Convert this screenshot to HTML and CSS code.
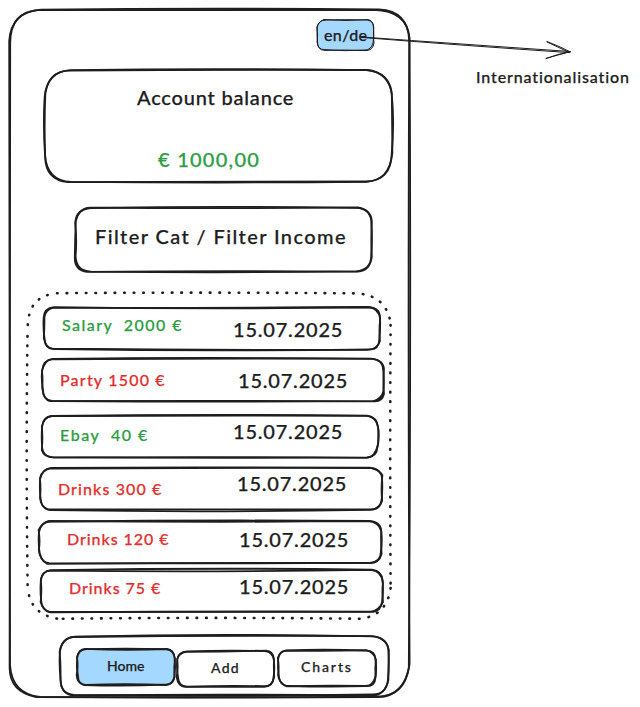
FILE: index.html
```html
<!DOCTYPE html>
<html lang="en">
<head>
<meta charset="utf-8">
<title>Account balance</title>
<link rel="stylesheet" href="styles.css">
</head>
<body>
<div class="board">
  <main class="phone">
    <svg class="sketch" viewBox="9 9 401 689" aria-hidden="true">
      <path d="M41 9.7 Q205 7.7 379 9.5 Q408.5 11 409.2 41 Q407.8 360 409.6 664 Q405 696 378 697.2 Q200 698 40 696.8 Q12 694 10 665 Q10.4 340 9.2 41 Q11 12 41 9.7Z"/>
      <path d="M38 10.2 Q220 9.6 374 9.9 Q407 11 409.6 38 Q411.2 340 408.8 668 Q404 697 376 696.6 Q220 697.6 36 697 Q10 692 9.6 668 Q9 380 10.2 44 Q10 12 38 10.2Z"/>
    </svg>

    <button class="lang">
      <svg class="sketch sketch-fine sketch-blue" viewBox="317 20 57 31" aria-hidden="true">
        <path class="fill" d="M325 20 Q345 19.3 367 20 Q374 21 373.8 28 Q373 36 374 43 Q373 50.4 366 50.6 Q345 49.6 325 50.4 Q317.5 50 317.6 43 Q316.6 35 317.2 28 Q318 20.5 325 20Z"/>
        <path d="M324 19.6 Q346 21.4 368 19.6 Q373 20 373.4 27 Q374.6 37 373 43 Q371 50 365 50 Q345 51.6 324 49.6 Q318 49.5 317 42 Q318.4 35 316.8 27 Q319 21 324 19.6Z"/>
      </svg>
      <span class="t-lang">en/de</span>
    </button>

    <section class="balance">
      <svg class="sketch" viewBox="45 70 348 113" aria-hidden="true">
        <path d="M71 70.1 Q220 68.2 366 70.2 Q391 72 392 97 Q394.5 125 391.6 155 Q391 180 366 181.8 Q220 183.2 71 181.8 Q47 181 45 155 Q43 125 44.6 97 Q47 71 71 70.1Z"/>
        <path d="M68 70.7 Q220 69.5 368 70 Q389 73 391.8 94 Q392 125 392.4 153 Q389 181 367 181.5 Q220 182 68 182.2 Q45.5 180 45.2 157 Q44 125 45.4 93 Q49 72 68 70.7Z"/>
      </svg>
      <h1 class="t-title">Account balance</h1>
      <p class="t-total income">€ 1000,00</p>
    </section>

    <section class="filter">
      <svg class="sketch" viewBox="75 208 297 64" aria-hidden="true">
        <path d="M91 208 Q220 205.8 356 207.8 Q371 208 371.4 223 Q372.6 240 371.2 256 Q371 270 356 271.4 Q222 273 91 271.6 Q76 271 75.6 256 Q77 240 75.2 223 Q76 209 91 208Z"/>
        <path d="M90 207.6 Q220 208.8 358 207.4 Q371 210 371.8 221 Q370.8 240 371.8 257 Q370 271 358 271.6 Q220 270.4 87 271.8 Q74.6 270 74.8 258 Q75 240 75.8 221 Q79 208 90 207.6Z"/>
      </svg>
      <span class="t-filter">Filter Cat / Filter Income</span>
    </section>

    <section class="list">
      <svg class="sketch sketch-dotted" viewBox="27 292 364 327" aria-hidden="true">
        <path d="M57 293.2 Q210 292 358 293.4 Q386 296 390.4 322"/>
        <path d="M390.6 325 Q389.8 450 390.6 585"/>
        <path d="M390.6 588 Q387 615 361 618.8 Q210 617 60 618.8"/>
        <path d="M57 618.6 Q30 614 27.8 588"/>
        <path d="M27.6 585 Q25.8 450 27.6 328"/>
        <path d="M27.8 325 Q29 297 54 293.6"/>
      </svg>

      <article class="row row-1">
        <svg class="sketch" viewBox="44 307 336 43" aria-hidden="true">
          <path d="M54 307.2 Q210 309.5 370 307.4 Q380 308 380 318 Q380.6 329 379.2 340 Q379 349.4 370 349.4 Q210 351.6 54 349 Q45 349 44.6 339 Q43 329 43.6 318 Q44 308 54 307.2Z"/>
          <path d="M53 307.8 Q200 308.2 368 307 Q379 308 380.2 319 Q378.8 330 380 341 Q377 350 367 349.8 Q210 350.2 52 348.6 Q45.8 348 43.8 338 Q44.6 328 44.4 317 Q46 309 53 307.8Z"/>
        </svg>
        <span class="amount income">Salary&nbsp; 2000 €</span>
        <time class="date">15.07.2025</time>
      </article>

      <article class="row row-2">
        <svg class="sketch" viewBox="42 358 342 43" aria-hidden="true">
          <path d="M53 358.8 Q210 357.2 373 358.8 Q383 360 383.2 370 Q384.4 380 383.4 391 Q382 400.6 373 401.2 Q210 402 52 401 Q43 400 43 390 Q41 379 42.2 370 Q43 360 53 358.8Z"/>
          <path d="M51 359.4 Q200 358.2 371 358.6 Q383.4 360 384 369 Q382.8 382 384 394 Q382 402 374 401.4 Q220 400.4 50 401.2 Q43.6 400 42.2 388 Q43 379 42 371 Q45 360 51 359.4Z"/>
          <path d="M374 401 Q380 399 383.4 393"/>
        </svg>
        <span class="amount expense">Party 1500 €</span>
        <time class="date">15.07.2025</time>
      </article>

      <article class="row row-3">
        <svg class="sketch" viewBox="42 415 337 43" aria-hidden="true">
          <path d="M52 416 Q210 413.8 367 415.6 Q377 417 378 427 Q379.8 437 377.4 447 Q377 457 367 457.4 Q210 458.4 52 457.2 Q43 456 42.2 448 Q41.2 437 42.2 426 Q43 417 52 416Z"/>
          <path d="M51 416.2 Q210 415 366 415.8 Q377 416 378.4 430 Q378.2 437 378.2 444 Q375 458 366 457.8 Q210 456.4 54 457.6 Q43.6 457 41.8 450 Q43 437 41.8 427 Q44 417 51 416.2Z"/>
        </svg>
        <span class="amount income">Ebay&nbsp; 40 €</span>
        <time class="date">15.07.2025</time>
      </article>

      <article class="row row-4">
        <svg class="sketch" viewBox="40 468 342 43" aria-hidden="true">
          <path d="M51 467.8 Q210 466.8 371 468 Q381 469 382 478 Q382.8 489 381.6 500 Q380 510 370 509.8 Q210 512.6 50 510.2 Q42 509 40.8 500 Q39.2 489 40.2 478 Q42 469 51 467.8Z"/>
          <path d="M50 468.6 Q210 468.4 370 467.6 Q378 469 382.4 475 Q380.8 489 382.2 501 Q379 509 371 509.4 Q210 508.8 48 509.4 Q41 507 40 498 Q41 489 40 479 Q42 470 50 468.6Z"/>
        </svg>
        <span class="amount expense">Drinks 300 €</span>
        <time class="date">15.07.2025</time>
      </article>

      <article class="row row-5">
        <svg class="sketch" viewBox="39 521 343 43" aria-hidden="true">
          <path d="M50 521.6 Q210 519.8 370 521 Q381 522 381.4 532 Q382.4 542 380.8 552 Q381 562 370 562.8 Q210 563.8 49 563.2 Q42 563 39.6 553 Q38 542 39 532 Q41 522 50 521.6Z"/>
          <path d="M49 521 Q210 522.4 368 521.2 Q379 522 381.2 531 Q380.8 542 381.6 554 Q379 564 368 563 Q210 562.6 47 563.8 Q40 560 38.8 550 Q40.4 542 38.6 530 Q43 522 49 521Z"/>
        </svg>
        <span class="amount expense">Drinks 120 €</span>
        <time class="date">15.07.2025</time>
      </article>

      <article class="row row-6">
        <svg class="sketch" viewBox="41 570 342 43" aria-hidden="true">
          <path d="M51 570.2 Q210 567.6 372 569.6 Q382 571 382.4 580 Q383.8 591 382 602 Q381 611 373 611.8 Q210 612.4 50 611.8 Q42 611 41.2 601 Q40 591 40.8 581 Q42 571 51 570.2Z"/>
          <path d="M50 570.6 Q210 572.4 371 569.8 Q382 571 383 583 Q381.8 591 383 602 Q378 612 370 611.6 Q210 611.2 50 612.4 Q43 610 40.6 602 Q42 591 40.8 579 Q43 571 50 570.6Z"/>
        </svg>
        <span class="amount expense">Drinks 75 €</span>
        <time class="date">15.07.2025</time>
      </article>
    </section>

    <nav class="nav">
      <svg class="sketch" viewBox="60 636 329 60" aria-hidden="true">
        <path d="M75 636.6 Q220 633.2 373 636.4 Q388 638 388.4 651 Q389.4 665 387.8 681 Q386 694 373 694.4 Q220 696.6 74 694.8 Q61 694 60.8 681 Q58.8 665 60 651 Q62 638 75 636.6Z"/>
        <path d="M73 637 Q220 635 371 636.2 Q386 637 388.8 650 Q388.6 665 388.4 680 Q385 696 371 695.4 Q220 694 72 695.4 Q60.6 693 60.4 679 Q61 665 59.6 652 Q62 638 73 637Z"/>
      </svg>
      <a class="tab tab-home">
        <svg class="sketch sketch-blue" viewBox="77 649 98 36" aria-hidden="true">
          <path class="fill" d="M86 649.2 Q125 648 166 649.2 Q174 650 174.6 658 Q175.6 667 174.6 676 Q174 684.6 166 685 Q125 683.4 86 685 Q78 685 78 676 Q76 667 77.2 658 Q78 650 86 649.2Z"/>
          <path d="M85 648.8 Q125 650.6 167 649 Q174 650 175 659 Q173.8 667 174.4 677 Q172 685.4 165 684.6 Q125 686.2 84 685 Q77 683 76.6 675 Q78.4 667 77 657 Q79 649 85 648.8Z"/>
        </svg>
        <span class="t-tab">Home</span>
      </a>
      <a class="tab tab-add">
        <svg class="sketch" viewBox="177 651 97 36" aria-hidden="true">
          <path d="M187 651.4 Q225 650 265 651 Q273 652 273.8 660 Q275 669 273.4 678 Q273 686 265 686.2 Q225 685.4 187 686.6 Q178.6 686 178.2 678 Q176.4 669 177.2 660 Q178 652 187 651.4Z"/>
          <path d="M186 651.8 Q225 651.6 266 650.6 Q273 651 274 659 Q273.6 669 274.2 677 Q272 687 264 686.8 Q225 686.8 185 686.8 Q178 686 176.6 677 Q178.4 669 177.2 659 Q179 653 186 651.8Z"/>
        </svg>
        <span class="t-tab">Add</span>
      </a>
      <a class="tab tab-charts">
        <svg class="sketch" viewBox="278 650 98 36" aria-hidden="true">
          <path d="M287 650.4 Q326 649 367 650.6 Q375 651 375.4 659 Q377 668 375.4 678 Q375 686 367 686.2 Q326 687 288 686 Q280 686 279 677 Q277.4 668 278.2 659 Q279 651 287 650.4Z"/>
          <path d="M286 650.6 Q326 651.4 366 650.2 Q374 652 376 660 Q374.8 668 375.6 676 Q373 686 366 686 Q326 685 287 686.4 Q279 683 278 675 Q279.4 668 277.8 658 Q280 651 286 650.6Z"/>
        </svg>
        <span class="t-tab">Charts</span>
      </a>
    </nav>
  </main>

  <aside class="note">
    <svg class="arrow" viewBox="360 30 220 36" aria-hidden="true">
      <path d="M362 37 Q460 44 570 51.5 M361 37.4 Q470 46 569.5 52.6"/>
      <path d="M547 41.5 Q559 46 570.5 52 M547 42 Q560 48 569 52.4"/>
      <path d="M546 58.6 Q557 54 570.5 51.6 M546.5 58.2 Q558 55 569.6 51.8"/>
    </svg>
    <p class="t-note">Internationalisation</p>
  </aside>
</div>
</body>
</html>
```
FILE: styles.css
```css
* {
  box-sizing: border-box;
}

body {
  margin: 0;
  background: #fff;
  color: #1e1e1e;
  font-family: Lato, "Open Sans", sans-serif;
  font-weight: 500;
  -webkit-text-stroke: 0.25px currentColor;
}

h1,
p {
  margin: 0;
  font-weight: inherit;
}

.board {
  display: flex;
  width: 640px;
  height: 707px;
  padding: 9px 0 0 9px;
  overflow: hidden;
}

.phone {
  position: relative;
  display: flex;
  flex: none;
  flex-direction: column;
  width: 401px;
  height: 689px;
}

/* Hand-drawn outline laid over its box */
.sketch {
  position: absolute;
  inset: 0;
  width: 100%;
  height: 100%;
  overflow: visible;
  fill: none;
  stroke: #1e1e1e;
  stroke-width: 1.8;
  stroke-linecap: round;
  pointer-events: none;
}

.sketch-fine {
  stroke-width: 1;
}

.sketch-blue .fill {
  fill: #a5d8ff;
}

.sketch-dotted {
  stroke-width: 2.6;
  stroke-dasharray: 0.6 8.95;
}

.income {
  color: #2f9e44;
}

.expense {
  color: #e03131;
}

.lang {
  position: relative;
  align-self: flex-end;
  width: 57px;
  height: 31px;
  margin: 11px 36px 0 0;
  padding: 0 0 2px 7px;
  border: 0;
  background: none;
  color: inherit;
  font: inherit;
  text-align: left;
}

.t-lang {
  position: relative;
  display: block;
  font-size: 16px;
  line-height: 20px;
  letter-spacing: 0.4px;
}

.balance {
  position: relative;
  width: 348px;
  height: 113px;
  margin: 19px 0 0 36px;
  padding-top: 15px;
}

.t-title {
  padding-left: 92px;
  font-size: 20px;
  line-height: 24px;
  letter-spacing: 0.8px;
}

.t-total {
  margin-top: 38px;
  padding-left: 113px;
  font-size: 20px;
  line-height: 24px;
  letter-spacing: 1.25px;
}

.filter {
  position: relative;
  width: 297px;
  height: 64px;
  margin: 25px 0 0 66px;
  padding: 16px 0 0 20px;
}

.t-filter {
  display: block;
  font-size: 20px;
  line-height: 24px;
  letter-spacing: 1.4px;
  white-space: nowrap;
}

.list {
  position: relative;
  width: 364px;
  height: 327px;
  margin: 20px 0 0 18px;
  padding-top: 15px;
}

.row {
  position: relative;
  display: grid;
  align-items: start;
  height: 43px;
  white-space: pre;
}

.amount {
  font-size: 16px;
  line-height: 20px;
}

.date {
  font-size: 20px;
  line-height: 24px;
  letter-spacing: 0.8px;
}

.row-1 {
  grid-template-columns: 171px 1fr;
  width: 336px;
  margin-left: 17px;
  padding-left: 18px;
}

.row-2 {
  grid-template-columns: 178px 1fr;
  width: 342px;
  margin: 8px 0 0 15px;
  padding-left: 18px;
}

.row-3 {
  grid-template-columns: 173px 1fr;
  width: 337px;
  margin: 14px 0 0 15px;
  padding-left: 18px;
}

.row-4 {
  grid-template-columns: 179px 1fr;
  width: 342px;
  margin: 10px 0 0 13px;
  padding-left: 18px;
}

.row-5 {
  grid-template-columns: 172px 1fr;
  width: 343px;
  margin: 10px 0 0 12px;
  padding-left: 28px;
}

.row-6 {
  grid-template-columns: 170px 1fr;
  width: 342px;
  margin: 6px 0 0 14px;
  padding-left: 28px;
}

.row-1 .amount { padding-top: 8px; letter-spacing: 1.45px; }
.row-1 .date { padding-top: 10px; }
.row-2 .amount { padding-top: 12px; letter-spacing: 1.2px; }
.row-2 .date { padding-top: 10px; }
.row-3 .amount { padding-top: 10px; letter-spacing: 1.5px; }
.row-3 .date { padding-top: 4px; }
.row-4 .amount { padding-top: 11px; letter-spacing: 1.1px; }
.row-4 .date { padding-top: 3px; }
.row-5 .amount { padding-top: 8px; letter-spacing: 0.95px; }
.row-5 .date { padding-top: 6px; }
.row-6 .amount { padding-top: 8px; letter-spacing: 0.95px; }
.row-6 .date { padding-top: 4px; }

.nav {
  position: relative;
  display: flex;
  width: 329px;
  height: 60px;
  margin: 17px 0 0 51px;
  padding: 13px 0 0 17px;
}

.tab {
  position: relative;
  height: 36px;
}

.tab-home {
  width: 98px;
  padding: 8px 0 0 30px;
}

.tab-add {
  width: 97px;
  margin: 2px 0 0 2px;
  padding: 8px 0 0 34px;
  letter-spacing: 1.3px;
}

.tab-charts {
  width: 98px;
  margin: 1px 0 0 4px;
  padding: 8px 0 0 23px;
  letter-spacing: 1.9px;
}

.t-tab {
  position: relative;
  display: block;
  font-size: 14px;
  line-height: 18px;
}

.note {
  padding: 58px 0 0 66px;
}

.t-note {
  font-size: 16px;
  line-height: 20px;
  letter-spacing: 0.88px;
}

.arrow {
  position: absolute;
  left: 360px;
  top: 30px;
  width: 220px;
  height: 36px;
  fill: none;
  stroke: #1e1e1e;
  stroke-width: 1;
  stroke-linecap: round;
}
```
